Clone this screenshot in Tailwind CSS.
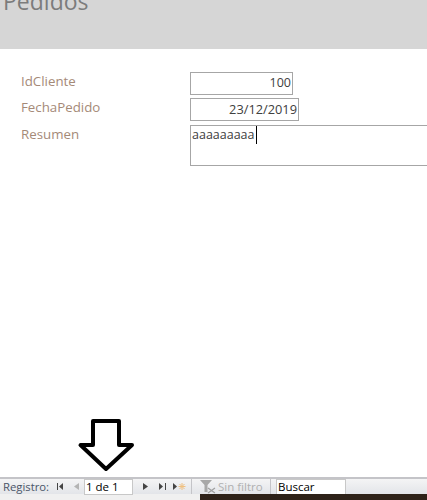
<!DOCTYPE html>
<html lang="es">
<head>
<meta charset="utf-8">
<script src="https://cdn.jsdelivr.net/npm/@tailwindcss/browser@4"></script>
</head>
<body class="bg-white overflow-hidden">
<div class="relative flex h-[500px] w-[427px] flex-col overflow-hidden font-['Open_Sans','Noto_Sans',sans-serif] text-[13.300px]">
  <header class="h-[49px] shrink-0 overflow-hidden bg-[#d6d6d6] pl-[3px]">
    <h1 class="mt-[-14px] text-[23px] leading-[31px] text-[#7c7c7c]">Pedidos</h1>
  </header>
  <main class="flex-1 pt-[23px]">
    <div class="flex h-[23px] items-center">
      <label class="w-[190px] pb-[3px] pl-[21px] text-[#a58a78]">IdCliente</label>
      <div class="flex h-full w-[103px] items-center justify-end border border-[#a6a6a6] pr-[1px] text-[12.500px] text-[#404040]">100</div>
    </div>
    <div class="mt-[3px] flex h-[23px] items-center">
      <label class="w-[190px] pb-[3px] pl-[21px] text-[#a58a78]">FechaPedido</label>
      <div class="flex h-full w-[109px] items-center justify-end border border-[#a6a6a6] pr-[1px] text-[12.800px] text-[#404040]">23/12/2019</div>
    </div>
    <div class="mt-[4px] flex h-[41px]">
      <label class="w-[190px] pl-[21px] text-[#a58a78]">Resumen</label>
      <div class="-mr-2 flex-1 border border-[#a6a6a6] pl-[1px] text-[12.500px] text-[#404040]"><span class="inline-block h-[18px] border-r border-black pr-[1px] leading-[18px]">aaaaaaaaa</span></div>
    </div>
  </main>
  <svg class="absolute left-[76px] top-[416px] h-[60px] w-[60px]" viewBox="76 416 60 60" fill="none" stroke="#000" stroke-width="4" stroke-linejoin="round"><path d="M93 421H119V445H132L106 469L80.500 445H93Z"/></svg>
  <footer class="relative h-[23px] shrink-0 border-t-2 border-[#c4c4c8] bg-[#f0f0f0]">
    <div class="flex h-[15px] items-center bg-linear-to-b from-[#f4f4f5] to-[#e3e5e9] whitespace-nowrap">
      <span class="ml-[3px] w-[50px] text-[11.300px] leading-[15px] text-[#4a5568]">Registro:</span>
      <svg class="ml-[3px] h-[9px] w-[9px] shrink-0" viewBox="0 0 9 9"><path d="M1 1h1v7H1zM7 1v7L3 4.500z" fill="#444"/></svg>
      <svg class="ml-[7px] h-[9px] w-[9px] shrink-0" viewBox="0 0 9 9"><path d="M7 1v7L2 4.500z" fill="#b4b4b4"/></svg>
      <div class="ml-[3px] h-[16px] w-[49px] shrink-0 self-start border border-[#c8c8c8] bg-white pl-[1px] text-[11.500px] leading-[14px] text-black">1 de 1</div>
      <svg class="ml-[8px] h-[9px] w-[9px] shrink-0" viewBox="0 0 9 9"><path d="M2 1v7l5-3.500z" fill="#444"/></svg>
      <svg class="ml-[8px] h-[9px] w-[9px] shrink-0" viewBox="0 0 9 9"><path d="M1 1v7l4-3.500zM7 1h1v7H7z" fill="#444"/></svg>
      <svg class="ml-[5px] h-[9px] w-[15px] shrink-0" viewBox="0 0 15 9"><path d="M1 1v7l4-3.500z" fill="#444"/><path d="M10 1v7M6.500 4.500h7M7.500 2l5 5M12.500 2l-5 5" stroke="#f0c080" stroke-width="1"/></svg>
      <div class="ml-[4px] h-[15px] w-px shrink-0 bg-[#c4c4c8]"></div>
      <svg class="ml-[8px] h-[14px] w-[18px] -mr-[2px] shrink-0" viewBox="0 0 18 14"><path d="M0 0h12L7.500 5v7h-3V5z" fill="#a8a8a8"/><path d="M8 8l7 5M15 8l-7 5" stroke="#a0a0a0" stroke-width="1.300"/></svg>
      <span class="ml-[2px] w-[45px] shrink-0 text-[11.500px] leading-[15px] text-[#b0b0b0]">Sin filtro</span>
      <div class="ml-[7px] h-[15px] w-px shrink-0 bg-[#c4c4c8]"></div>
      <div class="ml-[5px] h-[16px] w-[70px] shrink-0 self-start border border-[#c8c8c8] bg-white pl-[1px] text-[11.500px] leading-[14px] text-black">Buscar</div>
    </div>
    <div class="absolute bottom-0 left-[200px] right-0 h-[6px] bg-[#2e2219]"></div>
  </footer>
</div>
</body>
</html>
